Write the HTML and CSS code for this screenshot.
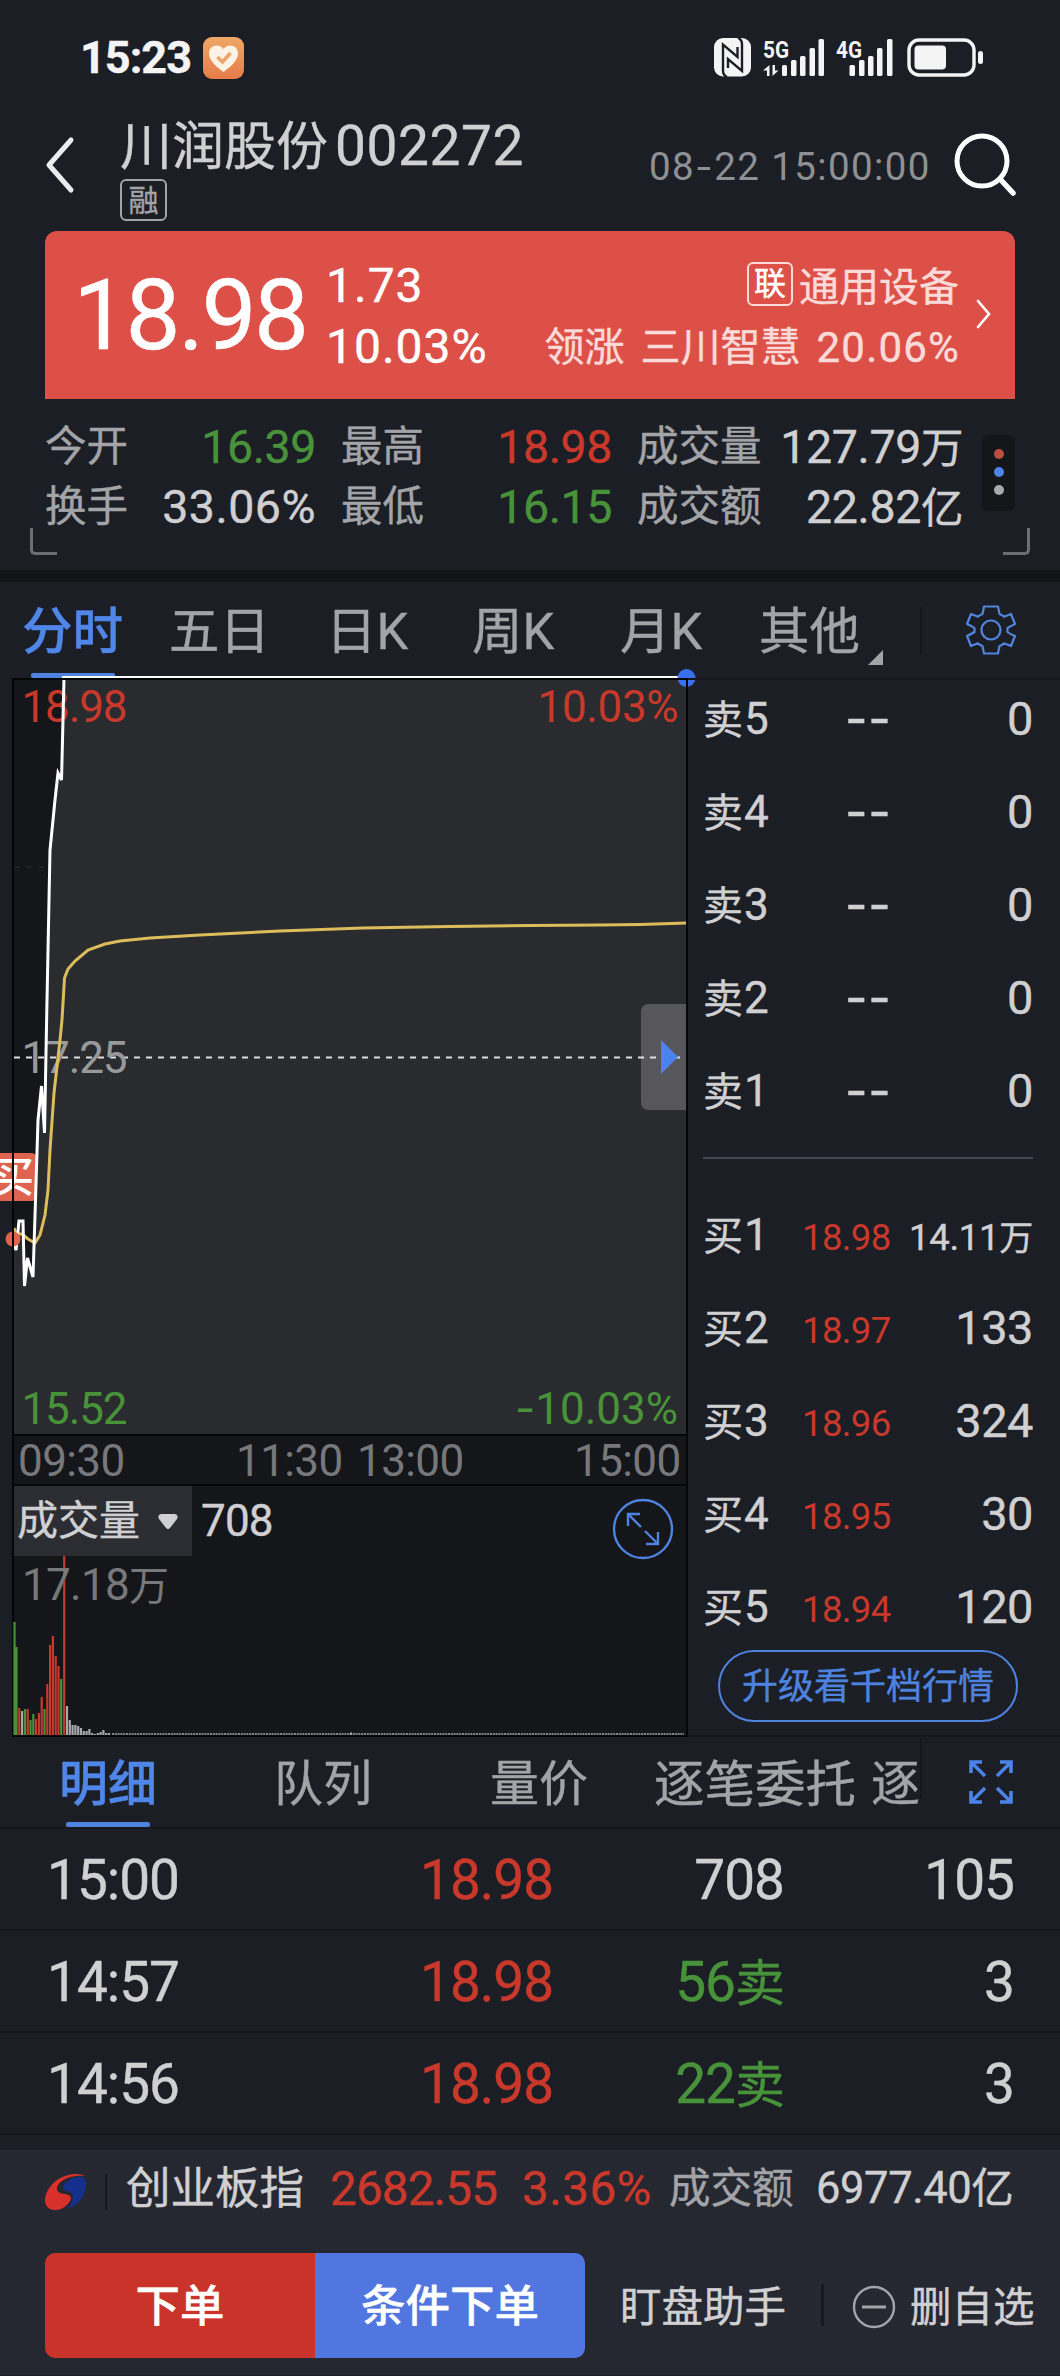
FILE: index.html
```html
<!DOCTYPE html>
<html lang="zh-CN">
<head>
<meta charset="utf-8">
<title>川润股份 002272</title>
<link rel="stylesheet" href="styles.css">
</head>
<body>
<div class="status">
  <span class="clock">15:23</span>
  <svg class="health" width="42" height="42" viewBox="0 0 42 42"><defs><linearGradient id="og" x1="0" y1="0" x2="0" y2="1"><stop offset="0" stop-color="#eea766"/><stop offset="1" stop-color="#e77c49"/></linearGradient></defs><rect width="41" height="42" rx="9" fill="url(#og)"/><path d="M20.500 35C14 30 6 24 6 16.500C6 8 16 6 20.500 12C25 6 35 8 35 16.500C35 24 27 30 20.500 35Z" fill="#fdf3e4"/><path d="M14.500 20l5 5 8-9" fill="none" stroke="#e9a668" stroke-width="3.600"/></svg>
  <svg class="radio" width="272" height="42" viewBox="713 37 272 42">
    <g fill="#f4f4f5">
      <rect x="714" y="38" width="37" height="38.500" rx="9"/>
      <rect x="782" y="65" width="5" height="11" rx="1.500"/><rect x="791" y="60" width="5.500" height="16" rx="1.500"/><rect x="800" y="56" width="5.500" height="20" rx="1.500"/><rect x="809.500" y="48" width="5.500" height="28" rx="1.500"/><rect x="818.500" y="39" width="5.500" height="37" rx="1.500"/>
      <rect x="849.500" y="65" width="5.500" height="11" rx="1.500"/><rect x="859" y="60" width="5.500" height="16" rx="1.500"/><rect x="868" y="56" width="5.500" height="20" rx="1.500"/><rect x="877" y="48" width="5.500" height="28" rx="1.500"/><rect x="887" y="39" width="5.500" height="37" rx="1.500"/>
      <path d="M769.500 65v11H767v-5.500h-4zM772.500 65v11l6-5.500h-3.500V65z"/>
      <rect x="914.500" y="45.500" width="31.500" height="24" rx="4"/>
      <rect x="978" y="51" width="5" height="13" rx="2.500"/>
    </g>
    <rect x="909" y="40" width="65" height="35" rx="10" fill="none" stroke="#f4f4f5" stroke-width="3.400"/>
    <path d="M727 77Q723 75 723 71V44.500L737.500 57V47M738 37.500Q742 40 742 44V71L728 59V68" fill="none" stroke="#1b1e25" stroke-width="2.400"/>
    <text x="763" y="57.500" class="net" textLength="26" lengthAdjust="spacingAndGlyphs">5G</text>
    <text x="836" y="57.500" class="net" textLength="26" lengthAdjust="spacingAndGlyphs">4G</text>
  </svg>
</div>

<header class="head">
  <svg class="back" width="34" height="60" viewBox="0 0 34 60"><path d="M28 5L6 30l22 25" fill="none" stroke="#ececee" stroke-width="5" stroke-linecap="round" stroke-linejoin="round"/></svg>
  <div class="title">
    <h1>川润股份<span class="code">002272</span></h1>
    <span class="badge">融</span>
  </div>
  <time class="stamp">08<span class="hy">-</span>22 15:00:00</time>
  <svg class="search" width="64" height="64" viewBox="0 0 64 64"><circle cx="29" cy="29" r="25" fill="none" stroke="#fff" stroke-width="5"/><path d="M47 47l13 14" stroke="#fff" stroke-width="5.500" stroke-linecap="round"/></svg>
</header>

<section class="quote">
  <div class="price">18.98</div>
  <div class="chg"><span>1.73</span><span>10.03%</span></div>
  <div class="sector">
    <div class="line"><span class="lian">联</span><span>通用设备</span></div>
    <div class="line second"><span>领涨</span><span>三川智慧</span><span class="pct">20.06%</span></div>
  </div>
  <svg class="go" width="18" height="32" viewBox="0 0 18 32"><path d="M3 3l11 13L3 29" fill="none" stroke="#fff" stroke-width="2.600" stroke-linecap="round"/></svg>
</section>

<section class="stats">
  <div class="grid">
    <span class="k">今开</span><span class="v down">16.39</span><span class="k">最高</span><span class="v up">18.98</span><span class="k">成交量</span><span class="v">127.79<i>万</i></span>
    <span class="k">换手</span><span class="v wide">33.06%</span><span class="k">最低</span><span class="v down">16.15</span><span class="k">成交额</span><span class="v">22.82<i>亿</i></span>
  </div>
  <div class="more"><b class="d1"></b><b class="d2"></b><b class="d3"></b></div>
  <b class="corner left"></b><b class="corner right"></b>
</section>

<div class="band"></div>

<nav class="periods">
  <span class="t1 on">分时</span><span class="t2">五日</span><span class="t3">日K</span><span class="t4">周K</span><span class="t5">月K</span><span class="t6">其他</span>
  <svg class="caret" width="16" height="16"><path d="M15 0v15H0z" fill="#a3a4a7"/></svg>
  <b class="vline"></b>
  <svg class="gear" width="50" height="50" viewBox="-25 -25 50 50" fill="none" stroke="#5184dc" stroke-width="2.200" stroke-linejoin="round"><circle r="9.500"/><path d="M-7-23.500H7L8.500-16Q11-15 13-13.300L20-16 24-6Q18-3 16.500-2V2Q19 4 24 6L20 16 13 13.300Q11 15 8.500 16L7 23.500H-7L-8.500 16Q-11 15-13 13.300L-20 16-24 6Q-18 3-16.500 2V-2Q-19-4-24-6L-20-16-13-13.300Q-11-15-8.500-16Z"/></svg>
</nav>

<main class="main">
  <div class="charts">
    <svg class="pricechart" width="676" height="758" viewBox="12 678 676 758">
      <rect x="12" y="679" width="675" height="757" fill="#15161a"/>
      <path d="M14 867H46" class="faint"/>
      <path d="M14 1245L16 1250 19 1220H23L24.500 1286 27.500 1257 33 1277 35.500 1200 38 1120 41.500 1086 44.500 1133 47 1000 50 850 55 800 58 773 61.500 780 62.500 740 64 678H687V1435H14Z" fill="#2a2b2f"/>
      <path d="M14 1057.500H687" stroke="#dedee0" stroke-width="2" stroke-dasharray="6 6"/>
      <text x="21.500" y="722" class="lab up" textLength="106">18.98</text>
      <text x="537.500" y="722" class="lab up" textLength="141">10.03%</text>
      <text x="21.500" y="1073" class="lab mid" textLength="106">17.25</text>
      <text x="21.500" y="1424" class="lab down" textLength="106">15.52</text>
      <text x="515" y="1424" class="lab down" textLength="163"><tspan class="hy">-</tspan>10.03%</text>
      <path d="M-2 1153H31Q37 1153 37 1159V1195Q37 1201 31 1201H-2Z" fill="#de6450"/>
      <text x="-8" y="1192" class="buy">买</text>
      <path d="M14 1228L16 1234 22 1234 28 1239 35 1243 40 1235 45 1215 48 1190 50 1150 54 1093 60 1040 62 1020 64.500 978 68 969 75 961 88 950 105 944 120 941 150 938 200 935 280 931 363 928 450 926.500 530 925.500 600 925 640 924.500 687 923" fill="none" stroke="#dcbc5b" stroke-width="3"/>
      <path d="M14 1243L16 1250 19 1221H23L24.500 1286 27.500 1258 33 1277 35.500 1200 38 1120 41.500 1086 44.500 1133 47 1000 50 850 55 800 58 773 61.500 780 62.500 740 64 678" fill="none" stroke="#fff" stroke-width="3"/>
      <path d="M62 677H687" stroke="#fff" stroke-width="2"/>
      <circle cx="13" cy="1239" r="7.500" fill="#de6450"/>
      <circle cx="686.500" cy="678" r="9" fill="#3a70ee"/>
      <path d="M687 1004H649Q641 1004 641 1012V1102Q641 1110 649 1110H687Z" fill="#5b5b60" fill-opacity=".9"/>
      <path d="M641 1057.500H687" stroke="#dedee0" stroke-width="2" stroke-dasharray="6 6" stroke-dashoffset="3"/>
      <path d="M661 1040L678 1057 661 1074Z" fill="#4a83ee"/>
      <path d="M12 679H688M13 679V1436M687 679V1436M12 1435H688" stroke="#050608" stroke-width="2" fill="none"/>
    </svg>
    <div class="axis"><span>09:30</span><span class="noon">11:30</span><span class="pm">13:00</span><span class="end">15:00</span></div>
    <div class="volume">
      <div class="vhead">
        <div class="vsel">成交量<svg width="22" height="18"><path d="M4 1H18Q22 2 20 6L13 15Q11 17 9 15L2 6Q0 2 4 1Z" fill="#d0d0d2"/></svg></div>
        <span class="vnum">708</span>
        <svg class="expand" width="62" height="62" viewBox="-31 -31 62 62" fill="none" stroke="#4e82df" stroke-width="2.400"><circle r="29"/><path d="M-2-2L-15-15M-15-3V-15H-3M2 2L15 15M15 3V15H3"/></svg>
      </div>
      <svg class="bars" width="672" height="179" viewBox="14 1556 672 179">
        <g stroke-width="2.200">
          <path stroke="#48923a" d="M14.500 1735V1622M16.500 1735V1647M25 1735V1709M30.500 1735V1720M33.300 1735V1714M44.500 1735V1709M61.200 1735V1679"/>
          <path stroke="#c8382b" d="M19.300 1735V1708M27.700 1735V1709M36 1735V1719M38.900 1735V1713M41.700 1735V1697M47.300 1735V1684M50.100 1735V1645M52.900 1735V1636M55.700 1735V1656M58.500 1735V1666M64.200 1735V1556"/>
          <path stroke="#a8a9ab" d="M22.100 1735V1711M67 1735V1706M69.800 1735V1720M72.600 1735V1725M75.400 1735V1725M78.200 1735V1726M81 1735V1728M83.800 1735V1731M86.600 1735V1731M89.400 1735V1729M92.200 1735V1733M95 1735V1734M97.800 1735V1733M100.600 1735V1732M103.400 1735V1730M106.200 1735V1733M109 1735V1733M351 1735V1732.500"/>
        </g>
        <path d="M112 1734H684" stroke="#a8a9ab" stroke-width="1.600" stroke-dasharray="2 .8"/>
        <text x="22" y="1600" class="lab grey" textLength="147">17.18<tspan font-size="40">万</tspan></text>
      </svg>
    </div>
  </div>
  <div class="book">
    <div class="lvl"><span>卖<em>5</em></span><span class="dash">--</span><span class="q">0</span></div>
    <div class="lvl"><span>卖<em>4</em></span><span class="dash">--</span><span class="q">0</span></div>
    <div class="lvl"><span>卖<em>3</em></span><span class="dash">--</span><span class="q">0</span></div>
    <div class="lvl"><span>卖<em>2</em></span><span class="dash">--</span><span class="q">0</span></div>
    <div class="lvl"><span>卖<em>1</em></span><span class="dash">--</span><span class="q">0</span></div>
    <div class="split"></div>
    <div class="lvl"><span>买<em>1</em></span><span class="p">18.98</span><span class="q small">14.11<i>万</i></span></div>
    <div class="lvl"><span>买<em>2</em></span><span class="p">18.97</span><span class="q">133</span></div>
    <div class="lvl"><span>买<em>3</em></span><span class="p">18.96</span><span class="q">324</span></div>
    <div class="lvl"><span>买<em>4</em></span><span class="p">18.95</span><span class="q">30</span></div>
    <div class="lvl"><span>买<em>5</em></span><span class="p">18.94</span><span class="q">120</span></div>
    <div class="upgrade">升级看千档行情</div>
  </div>
</main>

<nav class="tabs">
  <span class="a1 on">明细</span><span class="a2">队列</span><span class="a3">量价</span><span class="a4">逐笔委托</span><span class="a5">逐</span>
  <svg class="full" width="44" height="44" viewBox="0 0 44 44" fill="none" stroke="#4a82e6" stroke-width="3.600"><path d="M2 13V2H13M2 2L16 16M31 2H42V13M42 2L28 16M2 31V42H13M2 42L16 28M42 31V42H31M42 42L28 28"/></svg>
</nav>
<section class="ticks">
  <div class="tick"><span>15:00</span><span class="up">18.98</span><span class="n">708</span><span class="n">105</span></div>
  <div class="tick"><span>14:57</span><span class="up">18.98</span><span class="n down">56<i>卖</i></span><span class="n">3</span></div>
  <div class="tick"><span>14:56</span><span class="up">18.98</span><span class="n down">22<i>卖</i></span><span class="n">3</span></div>
</section>

<footer class="foot">
  <div class="index">
    <svg class="logo" width="42" height="38" viewBox="0 0 42 38"><path d="M40 3C29-2 13 3 5 14C-3 25-1 36 9 37C17 38 25 31 26 25C25 19 13 23 12 16C12 8 26 1 40 3Z" fill="#d8312b"/><path d="M38 4C29 2 18 9 18 15C19 20 28 16 28 24C28 29 25 33 21 36C33 33 41 22 41 11Q41 6 38 4Z" fill="#15308c"/></svg>
    <b class="bar1"></b>
    <span class="iname">创业板指</span><span class="ival up">2682.55</span><span class="ipct up">3.36%</span><span class="ik">成交额</span><span class="iv">6977.40<i>亿</i></span>
  </div>
  <div class="actions">
    <span class="order">下单</span><span class="cond">条件下单</span><span class="watch">盯盘助手</span><b class="bar2"></b>
    <svg class="minus" width="44" height="44" viewBox="-22 -22 44 44" fill="none" stroke="#a3a4a8" stroke-width="2.400"><circle r="20"/><path d="M-12 0H12" stroke-width="3"/></svg>
    <span class="del">删自选</span>
  </div>
</footer>
</body>
</html>
```
FILE: styles.css
```css
* { box-sizing: border-box; }
body {
  margin: 0;
  width: 1060px;
  height: 2376px;
  overflow: hidden;
  background: #1b1e25;
  color: #d0d0d2;
  font-family: Roboto, "Noto Sans CJK SC", sans-serif;
  white-space: nowrap;
  -webkit-text-stroke: 0.4px currentColor;
}
svg { display: block; flex: none; overflow: visible; }
svg text { -webkit-text-stroke: 0; }
i, em { font-style: normal; }
.up { color: #c8382b; fill: #c8382b; }
.down { color: #48923a; fill: #48923a; }
.hy { font-family: Inter, sans-serif; }

.status { display: flex; height: 116px; padding: 37px 0 0 80px; }
.clock { width: 123px; font-size: 45px; font-weight: 700; line-height: 42px; letter-spacing: -1px; color: #f4f4f5; }
.radio { margin-left: 468px; }
.net { font-size: 24px; font-weight: 700; fill: #f4f4f5; }

.head { display: flex; height: 115px; }
.back { margin: 19px 0 0 43px; }
.title { width: 529px; margin-left: 43px; }
.title h1 { display: flex; margin: 0; font-size: 52px; font-weight: 400; line-height: 63px; }
.code { margin-left: 7px; font-size: 55px; letter-spacing: 0.6px; line-height: 61px; }
.badge { display: block; width: 47px; height: 42px; border: 2px solid #a3a4a7; border-radius: 6px; color: #a3a4a7; font-size: 30px; line-height: 40px; text-align: center; }
.stamp { width: 304px; font-size: 38.500px; line-height: 101px; letter-spacing: 1.4px; color: #8f9094; -webkit-text-stroke: 0; }
.search { margin-top: 16px; }

.quote { display: flex; height: 168px; margin: 0 45px; padding-left: 28px; border-radius: 12px 12px 0 0; background: #dd5048; color: #fff; }
.price { width: 253px; font-size: 98px; line-height: 170px; letter-spacing: -2.5px; }
.chg { width: 171px; padding-top: 24px; font-size: 48px; line-height: 62px; letter-spacing: 1px; }
.chg span { display: block; }
.chg span + span { margin-top: -1px; }
.sector { width: 462px; padding-top: 26px; font-size: 40px; color: #fbdbd9; text-align: right; }
.line { display: flex; justify-content: flex-end; height: 61px; line-height: 62px; }
.second { gap: 16px; line-height: 60px; }
.second .pct { font-size: 42px; letter-spacing: 1.2px; margin-right: -1px; }
.lian { width: 46px; height: 44px; margin: 5px 6px 0 0; border: 2px solid #fbdbd9; border-radius: 6px; color: #fff; font-size: 32px; line-height: 41px; text-align: center; }
.go { margin: 67px 0 0 16px; }

.stats { position: relative; height: 171px; display: flex; padding: 18px 0 0 45px; }
.grid { display: grid; width: 937px; height: 120px; grid-template-columns: 105px 166px 25px 105px 166px 25px 125px 201px; grid-template-rows: 60px 60px; font-size: 41.500px; line-height: 60px; color: #a3a4a7; }
.k:nth-of-type(4n+3) { grid-column: 4; }
.k:nth-of-type(6n+5) { grid-column: 7; }
.k:nth-of-type(6n+3) { grid-column: 4; }
.k:nth-of-type(6n+1) { grid-column: 1; }
.v { font-size: 46.500px; letter-spacing: -0.4px; text-align: right; color: #d0d0d2; line-height: 60px; }
.v.down { color: #48923a; }
.v.up { color: #c8382b; }
.v.wide { letter-spacing: 0.5px; }
.v i { font-size: 42.500px; }
.more { width: 33px; height: 76px; margin-top: 18px; padding-top: 14px; border-radius: 6px; background: #15161a; }
.more b { display: block; width: 10px; height: 10px; margin: 0 auto 8px; border-radius: 50%; }
.d1 { background: #b9503f; }
.d2 { background: #4f83e6; }
.d3 { background: #a9a9ac; }
.corner { position: absolute; top: 129px; width: 27px; height: 27px; border: 3px solid #6c6e73; border-top: 0; }
.corner.left { left: 30px; border-right: 0; border-bottom-left-radius: 5px; }
.corner.right { right: 30px; border-left: 0; border-bottom-right-radius: 5px; }

.band { height: 12px; background: #141519; }

.periods { display: flex; height: 96px; padding-left: 22px; font-size: 50.500px; line-height: 99px; color: #a3a4a7; }
.on { color: #4f86e8; font-weight: 500; }
.on::after { content: ""; display: block; width: 84px; height: 5px; border-radius: 2px; background: #4f83e0; }
.t1::after { margin: -8px 0 0 9px; }
.t1 { width: 147px; }
.t2 { width: 157px; }
.t3 { width: 146px; }
.t4 { width: 148px; }
.t5 { width: 139px; }
.t6 { width: 109px; }
.caret { margin-top: 68px; }
.vline { width: 2px; height: 46px; margin: 25px 0 0 36px; background: #15171b; }
.gear { margin: 23px 0 0 44px; }

.main { display: flex; height: 1060px; }
.charts { width: 688px; padding-left: 12px; }
.faint { stroke: #202125; stroke-width: 2; stroke-dasharray: 6 6; }
.lab { font-size: 44px; }
.mid { fill: #99999c; }
.grey { fill: #77787c; }
.buy { font-size: 42px; font-weight: 500; fill: #fff; }
.axis { display: flex; height: 48px; padding: 0 4px; border: solid #050608; border-width: 0 2px; background: #15161a; font-size: 44px; line-height: 50px; letter-spacing: -0.6px; color: #77787c; -webkit-text-stroke: 0; }
.axis span { width: 218px; }
.axis .noon { width: 121px; }
.axis .pm { width: 217px; }
.axis .end { width: 106px; }
.volume { width: 676px; height: 253px; border: 2px solid #050608; background: #15161a; }
.vhead { display: flex; height: 70px; }
.vsel { display: flex; width: 178px; padding-left: 3px; background: #2c2d32; font-size: 41px; line-height: 71px; gap: 17px; }
.vsel svg { margin-top: 27px; }
.vnum { width: 421px; padding-left: 9px; font-size: 44px; line-height: 70px; letter-spacing: -0.8px; }
.expand { margin: 12px 0 0 -1px; }

.book { flex: 1; padding: 0 30px 0 15px; border-top: 2px solid #15171b; border-bottom: 2px solid #15171b; height: 1059px; }
.lvl { display: flex; height: 93px; font-size: 40px; line-height: 78px; }
.lvl > span { width: 142px; }
.lvl em { margin-left: 1px; font-size: 44px; letter-spacing: -1px; }
.lvl .dash { width: 60px; font-family: Inter, sans-serif; font-size: 49px; letter-spacing: 0.6px; }
.lvl .p { width: 94px; margin-left: -43px; font-size: 36.500px; line-height: 83px; letter-spacing: -0.6px; color: #c8382b; -webkit-text-stroke: 0; }
.lvl .q { width: auto; margin-left: auto; font-size: 47px; letter-spacing: -0.5px; }
.lvl .q.small { font-size: 36.500px; line-height: 83px; letter-spacing: -0.3px; }
.q.small i { font-size: 34px; }
.split { width: 330px; height: 2px; margin: 12px 0 37px; background: #43464e; }
.upgrade { width: 300px; height: 72px; margin: -11px 0 0 15px; border: 2px solid #4e82df; border-radius: 36px; color: #4e82df; font-size: 36px; line-height: 70px; text-align: center; }

.tabs { display: flex; height: 91px; padding-left: 59px; border-bottom: 2px solid #15171b; font-size: 49px; line-height: 93px; color: #a3a4a7; }
.a1 { width: 215px; }
.a1::after { margin: -9px 0 0 7px; }
.a2 { width: 216px; }
.a3 { width: 164px; }
.a4 { width: 217px; font-size: 50.500px; }
.a5 { width: 51px; height: 60px; border-right: 2px solid #15171b; }
.full { margin: 22px 0 0 47px; }
.tick { display: grid; grid-template-columns: 373px 212px 152px 230px; height: 102px; padding-left: 47px; border-bottom: 2px solid #15171b; font-size: 55px; line-height: 102px; letter-spacing: -1px; }
.tick .n { text-align: right; }
.tick i { font-size: 50px; }

.foot { margin-top: 15px; height: 225px; background: #252731; }
.index { display: flex; height: 103px; padding-left: 45px; line-height: 78px; }
.logo { margin-top: 23px; }
.bar1 { width: 2px; height: 36px; margin: 24px 19px 0 18px; background: #15161b; }
.iname { width: 204px; font-size: 44.500px; }
.ival { width: 192px; font-size: 47.500px; letter-spacing: -0.8px; }
.ipct { width: 147px; font-size: 47.500px; letter-spacing: 0.5px; }
.ik { width: 147px; font-size: 41.500px; color: #a3a4a7; }
.iv { font-size: 43.500px; letter-spacing: -0.4px; }
.iv i { font-size: 42.500px; }
.actions { display: flex; height: 105px; padding-left: 45px; line-height: 109px; font-size: 41.500px; color: #d0d0d2; }
.order, .cond { width: 270px; color: #fff; font-size: 44.500px; font-weight: 500; text-align: center; }
.order { border-radius: 10px 0 0 10px; background: #c93329; }
.cond { border-radius: 0 10px 10px 0; background: #5176e0; }
.watch { width: 201px; margin-left: 35px; }
.bar2 { width: 3px; height: 42px; margin-top: 31px; background: #17181d; }
.minus { margin: 32px 0 0 28px; }
.del { margin-left: 14px; }
```
